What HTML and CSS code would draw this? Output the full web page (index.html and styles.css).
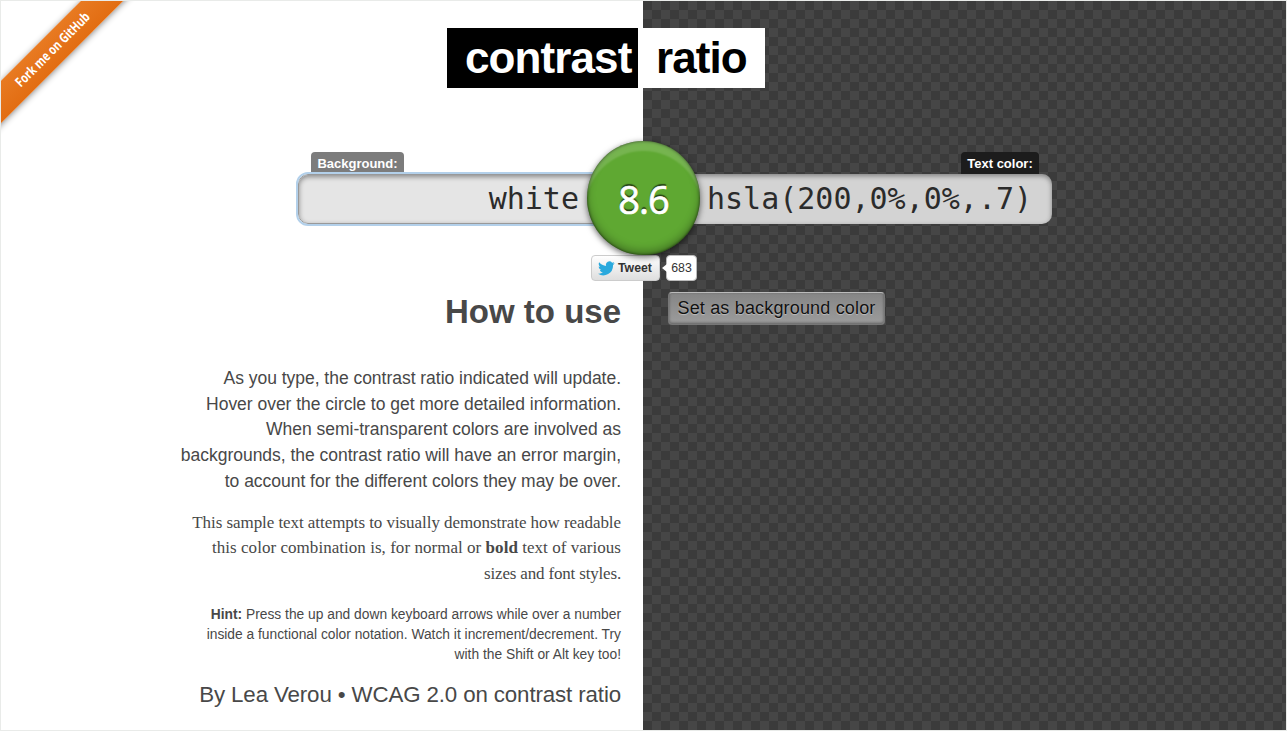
FILE: index.html
```html
<!DOCTYPE html>
<html lang="en">
<head>
<meta charset="utf-8">
<title>Contrast Ratio</title>
<link rel="stylesheet" href="styles.css">
</head>
<body>
<div class="page">
  <a class="ribbon"><span>Fork me on GitHub</span></a>
  <h1 class="logo"><span class="logo-dark">contrast</span><span class="logo-light">ratio</span></h1>
  <main>
    <div class="labels"><label class="label-bg">Background:</label><label class="label-fg">Text color:</label></div>
    <div class="fields">
      <div class="field field-bg">white</div>
      <div class="field field-fg">hsla(200,0%,0%,.7)</div>
      <div class="score">8.6</div>
    </div>
    <div class="tweet">
      <div class="tweet-button">
        <svg class="bird" viewBox="0 0 24 20"><path d="M23.6 2.6c-.9.4-1.8.7-2.8.8 1-.6 1.8-1.6 2.1-2.7-.9.6-2 1-3 1.200A4.800 4.800 0 0 0 11.500 6.300C7.500 6.100 4 4.200 1.700 1.300.4 3.500 1 6.300 3.200 7.700c-.8 0-1.500-.2-2.200-.6 0 2.300 1.700 4.300 3.900 4.800-.7.2-1.500.2-2.200.1.6 1.900 2.400 3.300 4.500 3.400A9.700 9.700 0 0 1 0 17.400 13.800 13.800 0 0 0 21.200 5.100c.9-.7 1.800-1.500 2.400-2.500z" fill="#2aa9dd"/></svg>
        <span>Tweet</span>
      </div>
      <div class="tweet-count">683</div>
    </div>
    <div class="columns">
      <section class="info">
        <h2><span>How to use</span></h2>
        <p class="intro">
          <span>As you type, the contrast ratio indicated will update.</span>
          <span>Hover over the circle to get more detailed information.</span>
          <span>When semi-transparent colors are involved as</span>
          <span>backgrounds, the contrast ratio will have an error margin,</span>
          <span>to account for the different colors they may be over.</span>
        </p>
        <p class="sample">
          <span class="tight">This sample text attempts to visually demonstrate how readable</span>
          <span class="loose">this color combination is, for normal or <b>bold</b> text of various</span>
          <span class="tighter">sizes and font styles.</span>
        </p>
        <p class="hint">
          <span><b>Hint:</b> Press the up and down keyboard arrows while over a number</span>
          <span>inside a functional color notation. Watch it increment/decrement. Try</span>
          <span>with the Shift or Alt key too!</span>
        </p>
        <footer>By Lea Verou • WCAG 2.0 on contrast ratio</footer>
      </section>
      <section class="actions"><button class="swap">Set as background color</button></section>
    </div>
  </main>
</div>
</body>
</html>
```
FILE: styles.css
```css
* { box-sizing: border-box; }
body { margin: 0; font-family: "Liberation Sans", Arial, sans-serif; color: #484848; }
.page {
  position: relative; width: 1287px; height: 731px; overflow: hidden;
  border: 1px solid #e9ebe9;
  background: linear-gradient(#fff, #fff) 0 0 / 642px 100% no-repeat,
    conic-gradient(#464646 25%, #3b3b3b 0 50%, #464646 0 75%, #3b3b3b 0) 642px 0 / 18px 18px;
}
.ribbon {
  position: absolute; left: -56px; top: 35px; width: 214px; height: 30px;
  display: flex; align-items: center; justify-content: center;
  transform: rotate(-45deg); background: linear-gradient(#e87a22, #e26d12);
  box-shadow: 0 1px 6px rgba(0,0,0,.45);
  color: #fff; font: bold 13.5px "Open Sans", sans-serif;
}
.ribbon span { transform: translate(1px, -1px) scaleX(.78); white-space: nowrap; }
.logo { display: flex; margin: 27px 0 0 446px; height: 60px; width: 318px; font-size: 44px; line-height: 60px; letter-spacing: -.9px; }
.logo-dark { width: 191px; margin-right: 4px; padding-left: 18px; background: #000; color: #fff; }
.logo-light { flex: 1; padding-left: 14px; background: #fff; color: #000; }
.labels { display: flex; justify-content: space-between; width: 728px; height: 22px; margin: 64px 0 0 310px; font-size: 13px; font-weight: bold; line-height: 23px; color: #fff; }
.labels label { text-align: center; border-radius: 4px 4px 0 0; }
.label-bg { width: 93px; background: #7c7c7c; }
.label-fg { width: 78px; background: #1c1c1c; }
.fields { position: relative; display: flex; width: 754px; height: 50px; margin: 0 0 0 297px; color: #2b2b2b; font: 30px/49px "DejaVu Sans Mono", monospace; }
.field { height: 50px; box-shadow: inset 0 2px 5px rgba(0,0,0,.4); }
.field-bg { width: 345px; padding-right: 63px; text-align: right; background: #e5e5e5; border: 1px solid #999; border-radius: 10px 0 0 10px; outline: 2px solid #b3d0ea; line-height: 48px; }
.field-fg { flex: 1; padding-left: 64px; background: #d3d3d3; border-radius: 0 10px 10px 0; }
.score {
  position: absolute; left: 289px; top: -33px; width: 113px; height: 114px; border-radius: 50%;
  background: #5fa832; color: #fff; text-align: center; font: 38px/117px "Open Sans", sans-serif; letter-spacing: -1px;
  -webkit-text-stroke: .7px #fff;
  text-shadow: 0 -2px 1px rgba(0,0,0,.6);
  box-shadow: inset 0 12px 2px -2px rgba(255,255,255,.15), inset 0 -4px 8px rgba(0,0,0,.3), inset 0 0 3px rgba(0,0,0,.7), 0 2px 6px rgba(0,0,0,.6);
}
.tweet { display: flex; width: 106px; height: 26px; margin: 31px 0 0 590px; color: #333; line-height: 25px; }
.tweet-button { display: flex; align-items: center; width: 69px; padding-left: 6px; gap: 3px; border: 1px solid #ccc; border-radius: 4px; background: linear-gradient(#fff, #dedede); font-size: 12.3px; font-weight: bold; }
.bird { width: 17px; height: 15px; }
.tweet-count { position: relative; width: 31px; margin-left: 6px; border: 1px solid #bbb; border-radius: 4px; background: #fff; text-align: center; font-size: 12.3px; }
.tweet-count::before { content: ""; position: absolute; left: -5px; top: 8px; border: solid transparent; border-width: 4px 5px 4px 0; border-right-color: #fff; }
.columns { display: flex; }
.info { width: 642px; padding-right: 22px; text-align: right; }
.info p { margin: 0; }
.info p span { display: block; white-space: nowrap; }
.info h2 { margin: 10px 0 0; font-size: 33px; line-height: 42px; }
.info .intro { margin-top: 33px; font-size: 17.5px; line-height: 25.7px; letter-spacing: -.025px; }
.info .sample { margin-top: 15px; font: 17px/25.7px "Liberation Serif", serif; }
.sample .tight { letter-spacing: -.06px; }
.sample .loose { letter-spacing: .04px; }
.sample .tighter { letter-spacing: -.17px; }
.info .hint { margin-top: 18px; font-size: 13.8px; line-height: 20.2px; }
.info footer { margin-top: 14px; font-size: 22.3px; line-height: 32px; letter-spacing: -.12px; white-space: nowrap; }
.actions { padding: 11px 0 0 25px; }
.swap { width: 217px; height: 33px; padding: 0; border: 1px solid #777; border-top-color: #bbb; border-radius: 4px; background: linear-gradient(#858585, #9c9c9c); box-shadow: inset 0 -1px 3px rgba(0,0,0,.4); color: #111; font: 18px "Liberation Sans", sans-serif; letter-spacing: .17px; text-shadow: 0 1px 1px rgba(255,255,255,.4); }
```
